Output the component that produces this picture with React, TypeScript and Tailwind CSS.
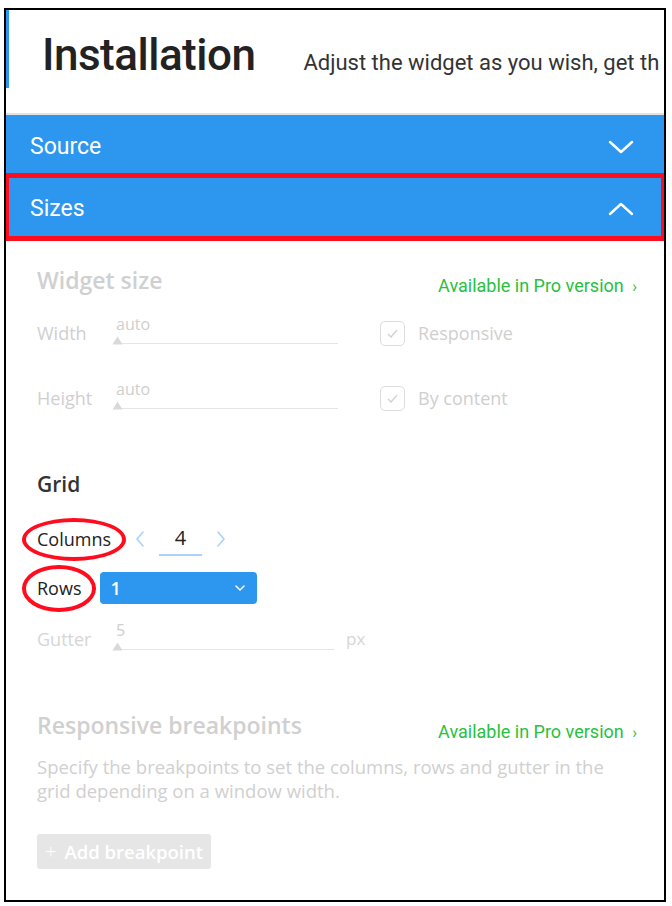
function ChevronDown() {
  return (
    <svg width="26" height="14" viewBox="0 0 26 14" fill="none">
      <polyline points="2,2 13,12 24,2" stroke="white" strokeWidth="2.4" strokeLinecap="round" strokeLinejoin="round" />
    </svg>
  );
}

function ChevronUp() {
  return (
    <svg width="26" height="14" viewBox="0 0 26 14" fill="none">
      <polyline points="2,12 13,2 24,12" stroke="white" strokeWidth="2.4" strokeLinecap="round" strokeLinejoin="round" />
    </svg>
  );
}

function Slider({ value, width }: { value: string; width: string }) {
  return (
    <div className={`relative h-[40px] ${width}`}>
      <span className="absolute left-[4px] top-[2px] text-[16px] leading-[18px] text-[#cfcfcf]">{value}</span>
      <div className="absolute left-[5px] right-0 top-[30px] h-px bg-[#e6e6e6]" />
      <svg className="absolute left-0 top-[23px]" width="11" height="9" viewBox="0 0 11 9">
        <path d="M5.5 0.5 L10.5 8.5 L0.5 8.5 Z" fill="#d9d9d9" strokeLinejoin="round" />
      </svg>
    </div>
  );
}

function Checkbox({ label }: { label: string }) {
  return (
    <div className="ml-[42px] flex items-center gap-[13px]">
      <div className="flex h-[25px] w-[25px] items-center justify-center rounded-[5px] border border-[#dcdcdc]">
        <svg width="11" height="9" viewBox="0 0 11 9" fill="none">
          <polyline points="1,5 4,8 10,1" stroke="#d0d0d0" strokeWidth="1.2" />
        </svg>
      </div>
      <span className="text-[18px] text-[#cfcfcf]">{label}</span>
    </div>
  );
}

function ProLink() {
  return (
    <span className="font-['Roboto',sans-serif] text-[18px] text-[#27c13f]">
      Available in Pro version <span className="ml-[4px] text-[16px]">›</span>
    </span>
  );
}

function Arrow({ dir }: { dir: "left" | "right" }) {
  return (
    <svg width="10" height="16" viewBox="0 0 10 16" fill="none">
      <polyline
        points={dir === "left" ? "8,1 2,8 8,15" : "2,1 8,8 2,15"}
        stroke="#a9d3f8"
        strokeWidth="1.6"
        strokeLinecap="round"
        strokeLinejoin="round"
      />
    </svg>
  );
}

export default function App() {
  return (
    <div className="h-[906px] w-[672px] overflow-hidden bg-white pl-[4px] pt-[8px]">
      <div className="h-[894px] w-[662px] overflow-hidden border-2 border-black font-['Open_Sans',sans-serif]">
        {/* header */}
        <div className="h-[105px] border-b-2 border-[#e3e3e3]">
          <div className="flex h-[78px] items-baseline border-l-[3px] border-[#2d96ef] pl-[33px] pt-[20px] font-['Roboto',sans-serif]">
            <h1 className="text-[44px] font-medium leading-[50px] tracking-[-0.5px] text-[#222]">Installation</h1>
            <p className="ml-[48px] whitespace-nowrap text-[22px] text-[#333]">Adjust the widget as you wish, get th</p>
          </div>
        </div>

        {/* accordion bars */}
        <div className="flex h-[58px] items-center justify-between bg-[#2d96ef] pl-[24px] pr-[30px] pt-[6px] font-['Roboto',sans-serif]">
          <span className="text-[23px] text-white">Source</span>
          <ChevronDown />
        </div>
        <div className="-mx-[2px] flex h-[68px] items-center justify-between border-[5px] border-[#ff0d1f] bg-[#2d96ef] pl-[21px] pr-[27px] pt-[4px] font-['Roboto',sans-serif]">
          <span className="text-[23px] text-white">Sizes</span>
          <ChevronUp />
        </div>

        {/* content */}
        <div className="pl-[31px] pr-[27px] pt-[19px]">
          <div className="flex h-[40px] items-center justify-between">
            <h2 className="text-[23px] font-semibold text-[#d0d0d0]">Widget size</h2>
            <div className="pt-[10px]"><ProLink /></div>
          </div>

          <div className="mt-[13px] flex h-[40px] items-center">
            <span className="w-[75px] text-[18px] text-[#cfcfcf]">Width</span>
            <Slider value="auto" width="w-[226px]" />
            <Checkbox label="Responsive" />
          </div>

          <div className="mt-[25px] flex h-[40px] items-center">
            <span className="w-[75px] text-[18px] text-[#cfcfcf]">Height</span>
            <Slider value="auto" width="w-[226px]" />
            <Checkbox label="By content" />
          </div>

          <h2 className="mt-[47px] flex h-[40px] items-center text-[21px] font-semibold text-[#333]">Grid</h2>

          <div className="mt-[14px] flex h-[40px] items-center">
            <span className="relative text-[18px] text-[#222]">
              Columns
              <span className="absolute -left-[15px] -right-[15px] -top-[8px] -bottom-[8px] rounded-[50%] border-[4px] border-[#ff0d1f]" />
            </span>
            <span className="ml-[24px] flex items-center"><Arrow dir="left" /></span>
            <span className="ml-[14px] w-[43px] border-b-2 border-[#a9d3f8] pb-[1px] text-center text-[20px] text-[#222]">4</span>
            <span className="ml-[14px] flex items-center"><Arrow dir="right" /></span>
          </div>

          <div className="mt-[13px] flex h-[32px] items-center">
            <span className="relative text-[18px] text-[#222]">
              Rows
              <span className="absolute -left-[15px] -right-[15px] -top-[10px] -bottom-[10px] rounded-[50%] border-[4px] border-[#ff0d1f]" />
            </span>
            <div className="ml-[19px] flex h-[32px] w-[157px] items-center justify-between rounded-[4px] bg-[#2d96ef] pl-[10px] pr-[12px]">
              <span className="text-[18px] font-semibold text-white">1</span>
              <svg width="10" height="6" viewBox="0 0 10 6" fill="none">
                <polyline points="1,1 5,5 9,1" stroke="white" strokeWidth="1.5" strokeLinecap="round" />
              </svg>
            </div>
          </div>

          <div className="mt-[15px] flex h-[40px] items-center">
            <span className="w-[75px] text-[18px] text-[#d6d6d6]">Gutter</span>
            <Slider value="5" width="w-[222px]" />
            <span className="ml-[12px] text-[17px] text-[#d6d6d6]">px</span>
          </div>

          <div className="mt-[46px] flex h-[40px] items-center justify-between">
            <h2 className="text-[23px] font-semibold text-[#d0d0d0]">Responsive breakpoints</h2>
            <div className="pt-[12px]"><ProLink /></div>
          </div>

          <p className="mt-[10px] w-[585px] text-[18.5px] leading-[24px] text-[#d0d0d0]">
            Specify the breakpoints to set the columns, rows and gutter in the grid depending on a window width.
          </p>

          <button className="mt-[31px] flex h-[35px] items-center gap-[8px] rounded-[3px] bg-[#e6e6e6] px-[8px] text-[18.5px] font-semibold text-white">
            <span className="text-[20px] font-light">+</span>
            Add breakpoint
          </button>
        </div>
      </div>
    </div>
  );
}
